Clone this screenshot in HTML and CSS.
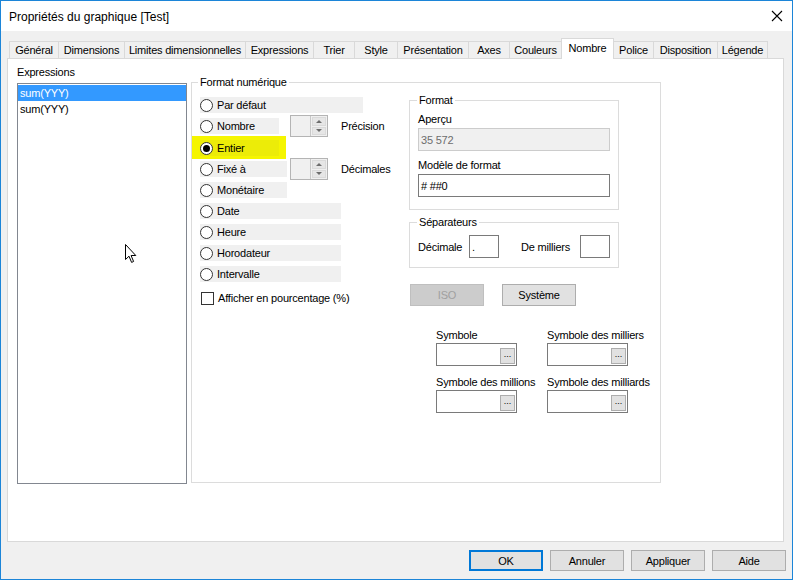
FILE: index.html
```html
<!DOCTYPE html>
<html lang="fr">
<head>
  <meta charset="UTF-8">
  <title>Propriétés du graphique [Test]</title>
  <link rel="stylesheet" href="styles.css">
</head>
<body>
  <div class="window">
    <div class="titlebar">
      <span class="title">Propriétés du graphique [Test]</span>
      <svg class="close" width="12" height="12" viewBox="0 0 12 12">
        <path d="M1 1 L11 11 M11 1 L1 11" stroke="#000" stroke-width="1.1" fill="none"/>
      </svg>
    </div>

    <div class="client">
      <div class="tabs">
        <div class="tab">Général</div>
        <div class="tab">Dimensions</div>
        <div class="tab">Limites dimensionnelles</div>
        <div class="tab">Expressions</div>
        <div class="tab">Trier</div>
        <div class="tab">Style</div>
        <div class="tab">Présentation</div>
        <div class="tab">Axes</div>
        <div class="tab">Couleurs</div>
        <div class="tab active">Nombre</div>
        <div class="tab">Police</div>
        <div class="tab">Disposition</div>
        <div class="tab">Légende</div>
      </div>

      <div class="panel">
        <div class="expr-col">
          <div class="caption">Expressions</div>
          <div class="listbox">
            <div class="item selected">sum(YYY)</div>
            <div class="item">sum(YYY)</div>
          </div>
        </div>

        <fieldset class="group numfmt">
          <legend>Format numérique</legend>
          <div class="numfmt-body">
            <div class="options">
              <div class="opt opt-wide"><span class="radio"></span>Par défaut</div>

              <div class="line">
                <div class="opt opt-short"><span class="radio"></span>Nombre</div>
                <div class="spin">
                  <div class="spin-field"></div>
                  <div class="spin-btns">
                    <div class="spin-btn"><span class="tri-up"></span></div>
                    <div class="spin-btn"><span class="tri-down"></span></div>
                  </div>
                </div>
                <span class="spin-label">Précision</span>
              </div>

              <div class="highlight">
                <div class="opt opt-short"><span class="radio checked"></span>Entier</div>
              </div>

              <div class="line">
                <div class="opt opt-mid"><span class="radio"></span>Fixé à</div>
                <div class="spin">
                  <div class="spin-field"></div>
                  <div class="spin-btns">
                    <div class="spin-btn"><span class="tri-up"></span></div>
                    <div class="spin-btn"><span class="tri-down"></span></div>
                  </div>
                </div>
                <span class="spin-label">Décimales</span>
              </div>

              <div class="opt opt-mid"><span class="radio"></span>Monétaire</div>
              <div class="opt opt-long"><span class="radio"></span>Date</div>
              <div class="opt opt-long"><span class="radio"></span>Heure</div>
              <div class="opt opt-long"><span class="radio"></span>Horodateur</div>
              <div class="opt opt-long"><span class="radio"></span>Intervalle</div>

              <div class="check-row"><span class="checkbox"></span>Afficher en pourcentage (%)</div>
            </div>

            <div class="side">
              <fieldset class="group format">
                <legend>Format</legend>
                <div class="field-label">Aperçu</div>
                <div class="textbox disabled">35 572</div>
                <div class="field-label spaced">Modèle de format</div>
                <div class="textbox"># ##0</div>
              </fieldset>

              <fieldset class="group seps">
                <legend>Séparateurs</legend>
                <div class="seps-row">
                  <span>Décimale</span>
                  <div class="textbox small">.</div>
                  <span class="seps-gap">De milliers</span>
                  <div class="textbox small"></div>
                </div>
              </fieldset>

              <div class="side-buttons">
                <div class="btn btn-disabled">ISO</div>
                <div class="btn">Système</div>
              </div>

              <div class="symbols">
                <div class="symbol">
                  <div class="field-label">Symbole</div>
                  <div class="picker"><span class="dots">...</span></div>
                </div>
                <div class="symbol">
                  <div class="field-label">Symbole des milliers</div>
                  <div class="picker"><span class="dots">...</span></div>
                </div>
                <div class="symbol">
                  <div class="field-label">Symbole des millions</div>
                  <div class="picker"><span class="dots">...</span></div>
                </div>
                <div class="symbol">
                  <div class="field-label">Symbole des milliards</div>
                  <div class="picker"><span class="dots">...</span></div>
                </div>
              </div>
            </div>
          </div>
        </fieldset>
      </div>

      <div class="actions">
        <div class="btn btn-default">OK</div>
        <div class="btn">Annuler</div>
        <div class="btn">Appliquer</div>
        <div class="btn">Aide</div>
      </div>
    </div>

    <!-- mouse pointer left in the capture -->
    <svg class="pointer" width="13" height="20" viewBox="0 0 13 20">
      <path d="M0.5 0.5 L0.5 15.5 L4 12.2 L6.6 18.4 L8.6 17.5 L6.1 11.5 L10.8 11.5 Z" fill="#fff" stroke="#000" stroke-width="1"/>
    </svg>
  </div>
</body>
</html>
```

FILE: styles.css
```css
* {
  box-sizing: border-box;
}
body {
  margin: 0;
  font-family: "Liberation Sans", Arial, sans-serif;
  font-size: 11px;
  letter-spacing: -0.2px;
  color: #000;
  background: #fff;
}
.window {
  position: relative;
  width: 793px;
  height: 580px;
  border: 1px solid #1c85d8;
  background: #f0f0f0;
  display: flex;
  flex-direction: column;
}

/* title bar */
.titlebar {
  height: 30px;
  background: #fff;
  display: flex;
  align-items: center;
  justify-content: space-between;
  padding: 1px 9px 0 8px;
}
.title {
  font-size: 12px;
  letter-spacing: 0;
}
.close {
  margin-top: -1px;
}

/* client area */
.client {
  flex: 1;
  display: flex;
  flex-direction: column;
  padding: 7px 8px 8px 6px;
}
.tabs {
  display: flex;
  align-items: flex-end;
  height: 20px;
  padding-left: 2px;
  position: relative;
  z-index: 1;
}
.tab {
  flex: none;
  height: 17px;
  margin-right: -1px;
  border: 1px solid #d9d9d9;
  border-bottom: none;
  background: #f0f0f0;
  display: flex;
  align-items: center;
  justify-content: center;
  white-space: nowrap;
}
/* tab widths as laid out by the dialog */
.tab:nth-child(1) { width: 50px; }
.tab:nth-child(2) { width: 67px; }
.tab:nth-child(3) { width: 122px; }
.tab:nth-child(4) { width: 69px; }
.tab:nth-child(5) { width: 42px; }
.tab:nth-child(6) { width: 44px; }
.tab:nth-child(7) { width: 72px; }
.tab:nth-child(8) { width: 42px; }
.tab:nth-child(9) { width: 53px; }
.tab:nth-child(10) { width: 53px; }
.tab:nth-child(11) { width: 41px; }
.tab:nth-child(12) { width: 65px; }
.tab:nth-child(13) { width: 51px; }
.tab.active {
  height: 21px;
  margin-bottom: -1px;
  padding-bottom: 2px;
  background: #fff;
  position: relative;
}
.panel {
  height: 484px;
  background: #fff;
  border: 1px solid #d9d9d9;
  display: flex;
  align-items: flex-start;
  padding: 5px 0 0 9px;
}

/* expressions list */
.expr-col {
  width: 170px;
}
.caption {
  line-height: 16px;
}
.listbox {
  margin-top: 3px;
  height: 401px;
  border: 1px solid #828790;
  padding-top: 1px;
}
.item {
  height: 16px;
  line-height: 16px;
  padding-left: 2px;
}
.item.selected {
  background: #3399ff;
  color: #fff;
}

/* group boxes */
.group {
  margin: 0;
  border: 1px solid #dcdcdc;
  min-width: 0;
}
.group legend {
  padding: 0 2px;
  line-height: 13px;
}
.numfmt {
  width: 470px;
  height: 407px;
  margin: 12px 0 0 4px;
  padding: 5px 8px 0 8px;
}
.numfmt legend {
  margin-left: -2px;
}
.numfmt-body {
  display: flex;
}

/* option list */
.options {
  width: 209px;
  padding-top: 3px;
  display: flex;
  flex-direction: column;
  align-items: flex-start;
}
.opt {
  height: 16px;
  background: #f0f0f0;
  display: flex;
  align-items: center;
  margin-bottom: 5px;
  white-space: nowrap;
}
.opt-wide { width: 163px; }
.opt-short { width: 79px; }
.opt-mid { width: 87px; }
.opt-long { width: 141px; }
.radio {
  width: 13px;
  height: 13px;
  border: 1px solid #333;
  border-radius: 50%;
  background: #fff;
  margin-right: 4px;
  display: flex;
  align-items: center;
  justify-content: center;
  flex-shrink: 0;
}
.radio.checked::after {
  content: "";
  width: 7px;
  height: 7px;
  border-radius: 50%;
  background: #000;
}
.line {
  display: grid;
  grid-template-columns: 90px 38px auto;
  align-items: center;
  height: 16px;
  margin-bottom: 5px;
}
.line .opt {
  margin-bottom: 0;
}
.options .line:nth-child(2) {
  margin-bottom: 2px;
}
.highlight {
  background: #f5f500;
  margin: 0 0 2px -8px;
  padding: 4px 7px 3px 8px;
}
.highlight .opt {
  margin-bottom: 0;
  background: #ecec08;
}
.spin {
  width: 38px;
  height: 22px;
  margin: -3px 0;
  border: 1px solid #b4b4b4;
  background: #f0f0f0;
  display: flex;
}
.spin-field {
  flex: 1;
}
.spin-btns {
  width: 17px;
  border-left: 1px solid #c8c8c8;
  display: flex;
  flex-direction: column;
  gap: 1px;
  padding: 1px;
}
.spin-btn {
  flex: 1;
  background: #e6e6e6;
  border: 1px solid #dadada;
  display: flex;
  align-items: center;
  justify-content: center;
}
.tri-up,
.tri-down {
  width: 0;
  height: 0;
  border-left: 3px solid transparent;
  border-right: 3px solid transparent;
}
.tri-up {
  border-bottom: 3px solid #6d6d6d;
}
.tri-down {
  border-top: 3px solid #6d6d6d;
}
.spin-label {
  padding-left: 13px;
  white-space: nowrap;
}
.check-row {
  margin-top: 3px;
  height: 16px;
  display: flex;
  align-items: center;
  white-space: nowrap;
}
.checkbox {
  width: 13px;
  height: 13px;
  border: 1px solid #333;
  background: #fff;
  margin: 0 4px 0 1px;
}

/* right side */
.side {
  width: 210px;
}
.format {
  padding: 4px 8px 12px 8px;
}
.format legend,
.seps legend {
  margin-left: -1px;
}
.field-label {
  line-height: 16px;
  margin-bottom: 1px;
  white-space: nowrap;
}
.field-label.spaced {
  margin-top: 6px;
}
.textbox {
  height: 23px;
  border: 1px solid #7a7a7a;
  background: #fff;
  padding: 0 2px;
  display: flex;
  align-items: center;
}
.textbox.disabled {
  background: #f0f0f0;
  border-color: #cccccc;
  color: #6d6d6d;
}
.seps {
  margin-top: 6px;
  padding: 6px 8px 9px 8px;
}
.seps-row {
  display: grid;
  grid-template-columns: 51px 30px 1fr 30px;
  align-items: center;
}
.textbox.small {
  width: 30px;
}
.seps-gap {
  padding-left: 22px;
}
.side-buttons {
  display: flex;
  gap: 18px;
  margin: 16px 0 0 1px;
}
.btn {
  width: 74px;
  height: 22px;
  border: 1px solid #adadad;
  background: #e1e1e1;
  display: flex;
  align-items: center;
  justify-content: center;
}
.btn-disabled {
  background: #cccccc;
  border-color: #bfbfbf;
  color: #a0a0a0;
}
.symbols {
  display: grid;
  grid-template-columns: 81px 81px;
  column-gap: 30px;
  row-gap: 8px;
  margin: 21px 0 0 27px;
}
.symbol .field-label {
  margin-bottom: 0;
}
.picker {
  height: 23px;
  border: 1px solid #7a7a7a;
  background: #fff;
  display: flex;
  justify-content: flex-end;
  align-items: flex-end;
  padding: 0 1px 1px 0;
}
.dots {
  width: 15px;
  height: 16px;
  border: 1px solid #adadad;
  background: #e1e1e1;
  font-size: 9px;
  line-height: 10px;
  letter-spacing: 0;
  text-align: center;
}

/* dialog buttons */
.actions {
  display: flex;
  justify-content: flex-end;
  gap: 7px;
  margin: 8px -2px 0 0;
}
.actions .btn {
  height: 21px;
}
.btn-default {
  border: 2px solid #0078d7;
}

.pointer {
  position: absolute;
  left: 124px;
  top: 243px;
}
```
